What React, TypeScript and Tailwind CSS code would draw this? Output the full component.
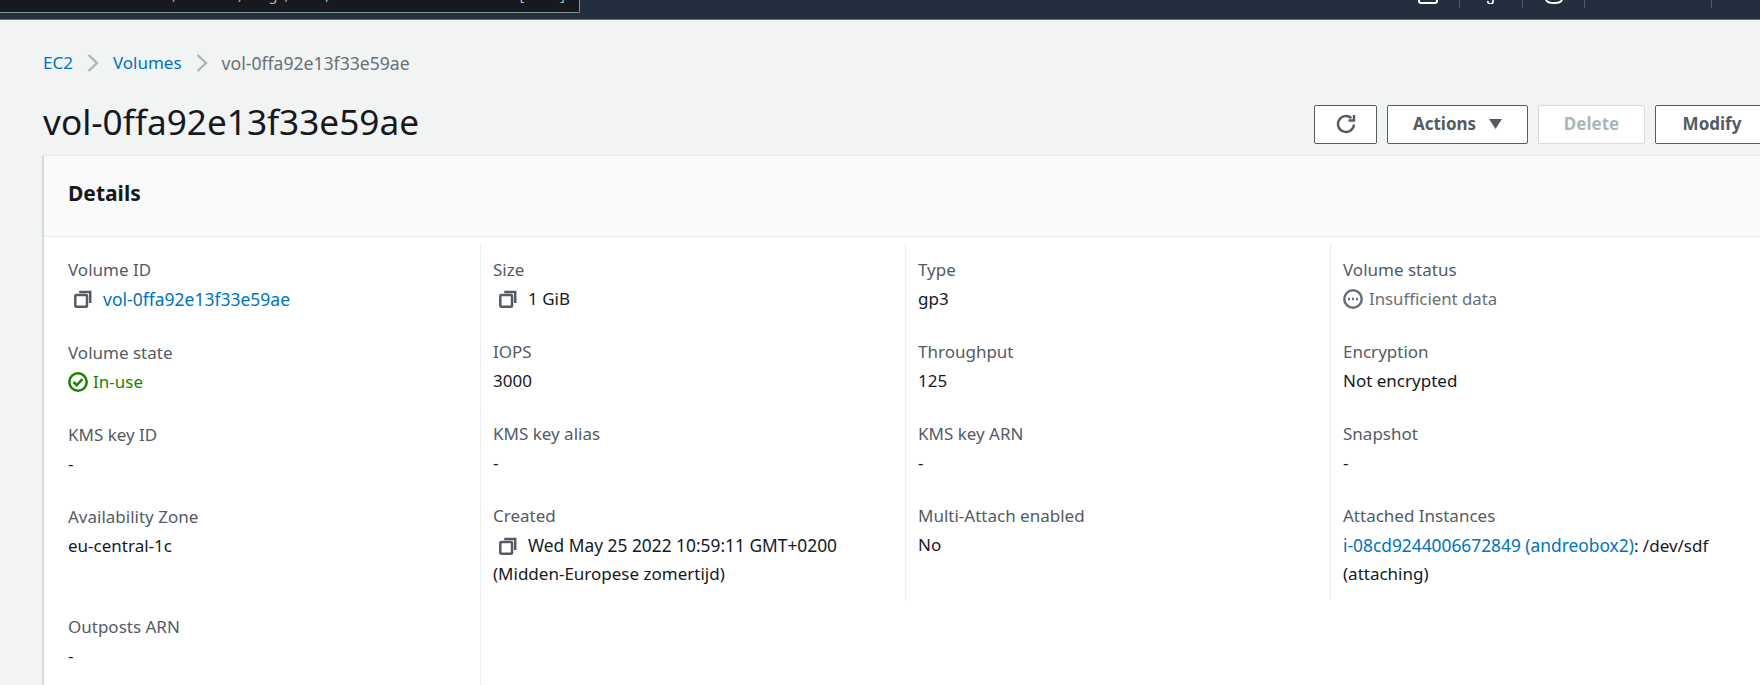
import React from 'react';

function CopyIcon() {
  return (
    <svg viewBox="0 0 18 18" className="w-[18px] h-[18px] shrink-0" fill="none" stroke="#545b64" strokeWidth="2.5">
      <rect x="1.3" y="5" width="11.7" height="11.7" rx="1" />
      <path d="M5.2 2h11v11" />
    </svg>
  );
}

function Chevron() {
  return (
    <svg viewBox="0 0 12 18" className="w-3 h-[18px] shrink-0" fill="none" stroke="#aab7b8" strokeWidth="2.4">
      <path d="M1.5 1l8.5 8-8.5 8" />
    </svg>
  );
}

function Copyable({ children }: { children: React.ReactNode }) {
  return (
    <span className="inline-flex items-center gap-[11px] pl-[6px] align-top">
      <CopyIcon />
      <span>{children}</span>
    </span>
  );
}

function Field({ label, children }: { label: string; children: React.ReactNode }) {
  return (
    <div className="pb-[23px] last:pb-0">
      <div className="text-[#545b64] leading-[31px] whitespace-nowrap">{label}</div>
      <div className="text-[#16191f] leading-[28px]">{children}</div>
    </div>
  );
}

function Button({ children, disabled = false, className = '' }: { children: React.ReactNode; disabled?: boolean; className?: string }) {
  return (
    <button
      className={`h-[39px] pb-[1px] shrink-0 rounded-[2px] bg-white border text-[17px] font-bold flex items-center justify-center ${
        disabled ? 'border-[#d5dbdb] text-[#aab7b8]' : 'border-[#545b64] text-[#545b64]'
      } ${className}`}
    >
      {children}
    </button>
  );
}

function NavSegment({ width, children }: { width: string; children?: React.ReactNode }) {
  return (
    <div className={`${width} h-[8px] border-r border-[#545b64] flex justify-center items-end overflow-hidden`}>{children}</div>
  );
}

export default function App() {
  return (
    <div className="w-[1760px] h-[685px] overflow-hidden bg-[#f2f3f3] text-[17px] font-['Noto_Sans',sans-serif]">
      {/* top nav, mostly scrolled out of the shot */}
      <div className="h-[20px] bg-[#232f3e] border-b border-[#687078] flex justify-between">
        <div className="w-[580px] h-[13px] bg-[#16191f] border-r border-b border-[#879596] rounded-br-[2px] overflow-hidden flex justify-between pl-[40px] pr-[14px] text-[15px] leading-[20px] text-[#aab7b8] whitespace-nowrap">
          <span className="-mt-[16px]">Search for services, features, blogs, docs, and more</span>
          <span className="-mt-[16px]">[Alt+S]</span>
        </div>
        <div className="flex">
          <NavSegment width="w-[63px]">
            <svg viewBox="0 0 20 4" className="w-5 h-1 mb-[4px]" fill="none" stroke="white" strokeWidth="2"><path d="M1 0v1a2 2 0 0 0 2 2h14a2 2 0 0 0 2-2V0" /></svg>
          </NavSegment>
          <NavSegment width="w-[63px]">
            <svg viewBox="0 0 8 4" className="w-2 h-1 mb-[4px]" fill="none" stroke="white" strokeWidth="1.6"><path d="M1 1a2.5 2.5 0 0 0 5 1V0" /></svg>
          </NavSegment>
          <NavSegment width="w-[62px]">
            <svg viewBox="0 0 18 4" className="w-[18px] h-1 mb-[4px]" fill="none" stroke="white" strokeWidth="2"><path d="M1 0c1 2 4 3 8 3s7-1 8-3" /></svg>
          </NavSegment>
          <NavSegment width="w-[127px]" />
          <div className="w-[48px]" />
        </div>
      </div>

      <div className="pl-[43px]">
        <nav className="mt-[31px] h-[24px] flex items-center gap-[14px] leading-[24px]">
          <span className="text-[#0073bb]">EC2</span>
          <Chevron />
          <span className="text-[#0073bb]">Volumes</span>
          <Chevron />
          <span className="text-[#687078] text-[17.6px]">vol-0ffa92e13f33e59ae</span>
        </nav>

        <div className="flex items-center mt-[30px]">
          <h1 className="flex-1 min-w-0 text-[35.2px] text-[#16191f] leading-[39px] -mt-[6px] whitespace-nowrap">vol-0ffa92e13f33e59ae</h1>
          <div className="w-[446px] shrink-0 flex gap-[10px] overflow-hidden">
            <Button className="w-[63px]">
              <svg viewBox="0 0 20 20" className="w-5 h-5" fill="none" stroke="#545b64" strokeWidth="2.4">
                <path d="M18 10.5a8 8 0 1 1-2.6-6.4" />
                <path d="M18 1v5.5h-5.5" />
              </svg>
            </Button>
            <Button className="w-[141px] gap-[13px]">
              Actions
              <svg viewBox="0 0 13 10" className="w-[13px] h-[10px]"><path d="M0 0h13L6.5 10z" fill="#545b64" /></svg>
            </Button>
            <Button disabled className="w-[107px]">Delete</Button>
            <Button className="w-[114px]">Modify</Button>
          </div>
        </div>

        <section className="mt-[11px] -ml-[1px] bg-white border-l-2 border-l-[#d5dbdb] border-t border-t-[#eaeded]">
          <div className="h-[81px] bg-[#fafafa] border-b border-[#eaeded] flex items-center pb-[4px] pl-[24px]">
            <h2 className="text-[21px] font-bold text-[#16191f]">Details</h2>
          </div>
          <div className="flex items-start pt-[7px]">
            <div className="w-[437px] pl-[24px] pt-[10px] pb-[13px] pr-[11px] border-r border-[#eaeded]">
              <Field label="Volume ID">
                <a className="text-[#0073bb] text-[17.5px]"><Copyable>vol-0ffa92e13f33e59ae</Copyable></a>
              </Field>
              <Field label="Volume state">
                <span className="flex items-center gap-[5px] text-[#1d8102]">
                  <svg viewBox="0 0 20 20" className="w-5 h-5 shrink-0" fill="none" stroke="#1d8102" strokeWidth="2.5">
                    <circle cx="10" cy="10" r="8.7" />
                    <path d="M5.5 10l3.2 3.2 5.8-6" />
                  </svg>
                  In-use
                </span>
              </Field>
              <Field label="KMS key ID">-</Field>
              <Field label="Availability Zone">
                eu-central-1c
                <br />
                &nbsp;
              </Field>
              <Field label="Outposts ARN">-</Field>
              <div className="h-[40px]" />
            </div>
            <div className="w-[425px] pl-[12px] pt-[10px] pb-[13px] pr-[12px] border-r border-[#eaeded]">
              <Field label="Size"><Copyable>1 GiB</Copyable></Field>
              <Field label="IOPS">3000</Field>
              <Field label="KMS key alias">-</Field>
              <Field label="Created">
                <Copyable><span className="text-[17.35px]">Wed May 25 2022 10:59:11 GMT+0200</span></Copyable> (Midden-Europese zomertijd)
              </Field>
            </div>
            <div className="w-[425px] pl-[12px] pt-[10px] pb-[13px] pr-[12px] border-r border-[#eaeded]">
              <Field label="Type">gp3</Field>
              <Field label="Throughput">125</Field>
              <Field label="KMS key ARN">-</Field>
              <Field label="Multi-Attach enabled">
                No
                <br />
                &nbsp;
              </Field>
            </div>
            <div className="w-[429px] pl-[12px] pt-[10px] pb-[13px] pr-[12px]">
              <Field label="Volume status">
                <span className="flex items-center gap-[6px] text-[#687078] text-[16.8px]">
                  <svg viewBox="0 0 20 20" className="w-5 h-5 shrink-0" fill="none" stroke="#687078" strokeWidth="2.5">
                    <circle cx="10" cy="10" r="8.7" />
                    <path d="M5 10h2M9 10h2M13 10h2" />
                  </svg>
                  Insufficient data
                </span>
              </Field>
              <Field label="Encryption">Not encrypted</Field>
              <Field label="Snapshot">-</Field>
              <Field label="Attached Instances">
                <a className="text-[#0073bb] text-[17.35px]">i-08cd9244006672849 (andreobox2)</a>: /dev/sdf (attaching)
              </Field>
            </div>
          </div>
        </section>
      </div>
    </div>
  );
}
